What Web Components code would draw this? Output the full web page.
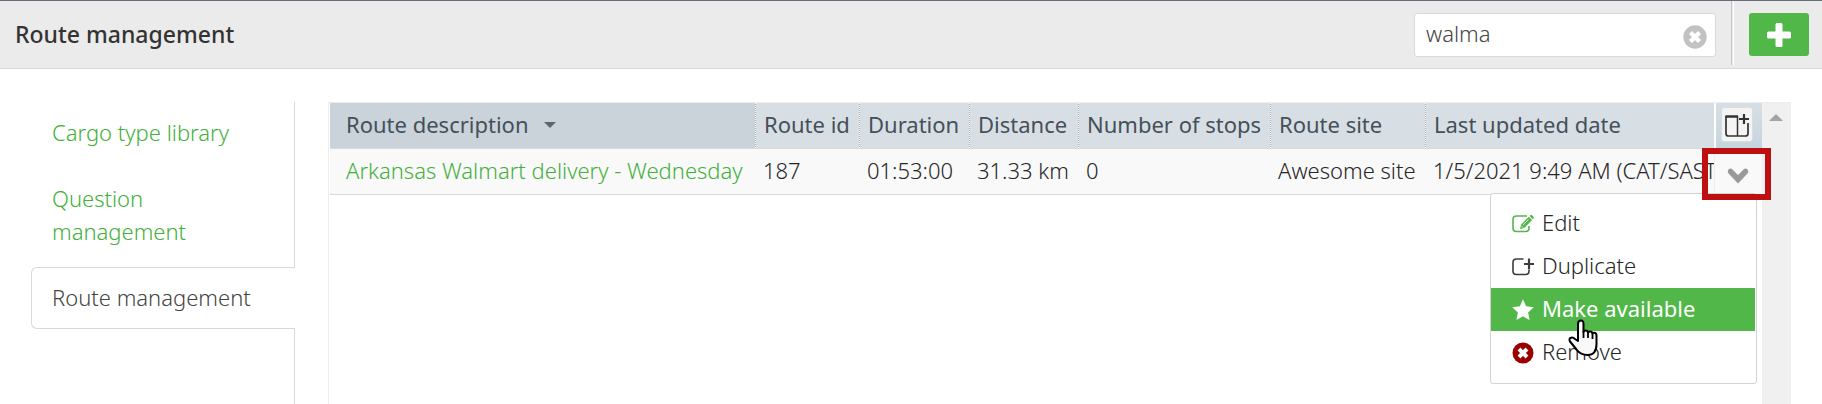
<!DOCTYPE html>
<html lang="en">
<head>
<meta charset="utf-8">
<title>Route management</title>
<style>
html{--green:#51b749;--link:#43b03a;--line:#d9d9d9;--ink:#262626}
body{margin:0;background:#fff;color:var(--ink);font:300 22px/33px "Noto Sans","Open Sans",sans-serif}
</style>
</head>
<body>
<app-shell>
  <page-header slot="header" heading="Route management">
    <search-box slot="search" value="walma"></search-box>
    <add-button slot="action"></add-button>
  </page-header>
  <side-nav slot="nav">
    <nav-item href="#cargo">Cargo type library</nav-item>
    <nav-item href="#questions">Question management</nav-item>
    <nav-item href="#routes" active>Route management</nav-item>
  </side-nav>
  <route-grid>
    <row-menu slot="menu">
      <menu-item icon="edit">Edit</menu-item>
      <menu-item icon="duplicate">Duplicate</menu-item>
      <menu-item icon="star" active>Make available</menu-item>
      <menu-item icon="remove">Remove</menu-item>
    </row-menu>
  </route-grid>
</app-shell>
<script>
const define = (name, render) => customElements.define(name, class extends HTMLElement {
  connectedCallback() {
    if (this.shadowRoot) return;
    this.attachShadow({mode: 'open'}).innerHTML = '<style>*{box-sizing:border-box}button,input{font:inherit;color:inherit;margin:0;padding:0;border:0;background:none}svg{display:block}</style>' + render(this);
  }
});

const icons = {
  edit: '<svg width="22" height="22" viewBox="0 0 22 22" fill="none" stroke="#51b749" stroke-width="1.6"><path d="M15 3H4.500Q1 3 1 6.500v8.500Q1 18.500 4.500 18.500h9q3.500 0 3.500-3.500V13"/><path d="M8 16l1.200-4.600 7.600-7.600 3.300 3.300-7.600 7.600z" fill="#51b749" stroke="none"/><path d="M17.600 3l.8-.8q.8-.8 1.600 0l1.500 1.500q.8.800 0 1.600l-.9.900z" fill="#51b749" stroke="none"/><path d="M11 12l5.500-5.500M9.500 13l1.500 1.500" stroke="#fff" stroke-width=".8"/></svg>',
  duplicate: '<svg width="22" height="22" viewBox="0 0 22 22" fill="none" stroke="#3c3c3c" stroke-width="1.600"><path d="M11.500 3h-7Q1 3 1 6.500v8.500Q1 18.500 4.500 18.500h9q3.500 0 3.500-3.500V14"/><path d="M17 2.500v11M12 8h10" stroke-width="2.200"/></svg>',
  star: '<svg width="22" height="22" viewBox="0 0 22 22"><path fill="#fff" d="M11 .3l3.100 7 7.700.9-5.700 5.200 1.500 7.700L11 17.300 4.400 21.100l1.500-7.700L.2 8.200l7.700-.9z"/></svg>',
  remove: '<svg width="22" height="22" viewBox="0 0 22 22"><circle cx="11" cy="11" r="10.500" fill="#9b0000"/><path d="M7 7l8 8M15 7l-8 8" stroke="#fff" stroke-width="4"/></svg>'
};

define('app-shell', () => `
<style>
:host{display:flex;flex-direction:column;min-height:100vh}
.body{flex:1;display:flex;gap:33px;padding:33px 31px 0}
main{flex:1;min-width:0;display:flex}
</style>
<slot name="header"></slot>
<div class="body"><slot name="nav"></slot><main><slot></slot></main></div>`);

define('page-header', el => `
<style>
:host{display:block}
header{display:flex;align-items:flex-start;height:69px;padding:12px 13px 0 15px;background:#ebebeb;border-top:1px solid #686d7b;border-bottom:1px solid var(--line)}
h1{flex:1;margin:5px 0 0;font-size:23px;line-height:33px;font-weight:500;color:#333}
.rule{width:3px;height:64px;margin:-12px 15px 0;border-left:1px solid #c4c4c4;border-right:1px solid #fff}
</style>
<header><h1>${el.getAttribute('heading')}</h1><slot name="search"></slot><span class="rule"></span><slot name="action"></slot></header>`);

define('search-box', el => `
<style>
:host{display:flex;align-items:center;width:302px;height:44px;box-sizing:border-box;border:1px solid var(--line);border-radius:3px;background:#fff;padding:0 8px 0 11px}
input{flex:1;min-width:0;height:33px;outline:0;color:#444;margin-bottom:4px}
button{margin-top:4px}
</style>
<input type="text" aria-label="Search routes" value="${el.getAttribute('value')}">
<button type="button" aria-label="Clear search"><svg width="24" height="24" viewBox="0 0 24 24"><circle cx="12" cy="12" r="11.700" fill="#c2c2c2"/><path d="M7.500 7.500l9 9M16.500 7.500l-9 9" stroke="#fff" stroke-width="4.400"/></svg></button>`);

define('add-button', () => `
<style>
:host{display:block}
button{display:grid;place-items:center;width:60px;height:43px;border-radius:3px;background:var(--green)}
</style>
<button type="button" aria-label="Add route"><svg width="24" height="24" viewBox="0 0 24 24"><path d="M10 0h4q1.500 0 1.500 1.500v7h7Q24 8.500 24 10v4q0 1.500-1.500 1.500h-7v7Q15.500 24 14 24h-4q-1.500 0-1.500-1.500v-7h-7Q0 15.500 0 14v-4q0-1.500 1.500-1.500h7v-7Q8.500 0 10 0z" fill="#fff"/></svg></button>`);

define('side-nav', () => `
<style>
:host{display:block;flex:0 0 264px}
nav{display:flex;flex-direction:column;gap:4px;height:100%;box-sizing:border-box;border-right:1px solid var(--line)}
</style>
<nav aria-label="Libraries"><slot></slot></nav>`);

define('nav-item', el => `
<style>
:host{display:block;border:1px solid transparent;border-right:0;padding:13px 24px 14px 20px}
:host([active]){border-color:var(--line);border-radius:6px 0 0 6px;background:#fff;margin-right:-1px}
a{display:block;max-width:200px;color:var(--link);text-decoration:none}
:host([active]) a{color:#444}
</style>
<a href="${el.getAttribute('href')}"${el.hasAttribute('active') ? ' aria-current="page"' : ''}><slot></slot></a>`);

define('route-grid', () => `
<style>
:host{flex:1;min-width:0;display:flex;border:1px solid #eee;border-bottom:0;padding-left:1px}
.view{flex:1;min-width:0}
table{width:100%;table-layout:fixed;border-collapse:separate;border-spacing:0}
th,td{height:46px;padding:0 0 2px 8px;border-bottom:1px solid var(--line);text-align:left;white-space:nowrap}
th{background:repeating-linear-gradient(#fff 0 1px,#a3acb3 1px 2px) left/1px 100% no-repeat #d7dfe5;color:#465059;font-weight:400;padding-left:9px}
th:first-child{background:#c9d3d9}
th:first-child,td:first-child{padding-left:16px}
td{background:#f9f9f9}
a{color:var(--link);text-decoration:none}
.sort{display:inline-block;margin:0 0 4px 15px;vertical-align:middle;border:6px solid transparent;border-top-color:#5c666e;border-bottom:0}
th.tools{padding:0;border-left:2px solid #fff;background:linear-gradient(#d7dfe5,#c4d5df)}
th.tools button{display:grid;place-items:center;width:32px;height:35px;margin:0 0 2px 5px;border:1px solid #ddd;border-radius:3px;background:#f4f4f4}
td.act{position:relative;padding:0;border-left:1px solid #eee}
td.act button{display:grid;place-items:center;width:100%;height:43px;padding:8px 2px 0 0}
.mark{position:absolute;z-index:3;left:-13px;top:-1px;width:69px;height:52px;border:6px solid #bd1111;pointer-events:none}
.pop{position:absolute;z-index:2;right:5px;top:44px}
.bar{flex:0 0 28px;background:#f0f0f0;display:flex;justify-content:center}
.bar i{width:0;height:0;margin-top:11px;border:7px solid transparent;border-top:0;border-bottom-color:#a3a3a3}
</style>
<div class="view"><table>
<colgroup><col style="width:425px"><col style="width:104px"><col style="width:110px"><col style="width:109px"><col style="width:192px"><col style="width:155px"><col><col style="width:48px"></colgroup>
<thead><tr><th scope="col" aria-sort="descending">Route description<span class="sort"></span></th><th scope="col">Route id</th><th scope="col">Duration</th><th scope="col">Distance</th><th scope="col">Number of stops</th><th scope="col">Route site</th><th scope="col">Last updated date</th>
<th class="tools"><button type="button" aria-label="Choose columns"><svg width="24" height="24" viewBox="0 0 24 24" fill="none" stroke="#333"><path d="M1 3v17.500Q1 23 3.500 23h17q2.500 0 2.500-2.500V10" stroke-width="1.700"/><path d="M.5 3.500h12.500" stroke-width="2.500"/><path d="M12.500 3v20" stroke-width="1.500"/><path d="M19 1v10M14 6h10" stroke-width="2.200"/></svg></button></th></tr></thead>
<tbody><tr><td><a href="#route-187">Arkansas Walmart delivery - Wednesday</a></td><td>187</td><td>01:53:00</td><td>31.33 km</td><td>0</td><td>Awesome site</td><td>1/5/2021 9:49 AM (CAT/SAST</td>
<td class="act"><button type="button" aria-label="Row actions" aria-expanded="true"><svg width="22" height="16" viewBox="0 0 22 16"><path d="M1.500 1.500q2-2 4 0L11 7l5.500-5.500q2-2 4 0 1.500 2 0 4L11 15.500 1.500 5.500q-1.500-2 0-4z" fill="#999"/></svg></button><div class="pop"><slot name="menu"></slot></div><span class="mark"></span></td></tr></tbody>
</table></div>
<div class="bar"><i></i></div>`);

define('row-menu', () => `
<style>
:host{display:block;position:relative}
.list{width:267px;box-sizing:border-box;padding:8px 1px 9px 0;background:#fff;border:1px solid #d3d3d3;border-radius:3px}
.cursor{position:absolute;left:78px;top:126px;pointer-events:none}
</style>
<div class="list" role="menu"><slot></slot></div>
<svg class="cursor" width="30" height="38" viewBox="0 0 30 38"><path d="M10 22V5Q10 1.500 12.800 1.500T15.500 5v8q.3-1.500 2-1.500 2.300 0 2.500 2 .5-1 2-1 2.200 0 2.500 2 .6-.8 1.800-.8 2.200 0 2.200 2.800v8.500Q28.500 36 19.500 36q-7 0-11-5.500L2 22.500q-1.500-3 1-3.800Q5 18 7 20z" fill="#f9f9f9" stroke="#000" stroke-width="2" stroke-linejoin="round"/><path d="M15.500 12v7M20 13.500V19M24.500 14.500V20" stroke="#000" stroke-width="1.800"/></svg>`);

define('menu-item', el => `
<style>
:host{display:block}
button{display:flex;align-items:center;gap:8px;width:100%;height:43px;padding:0 0 2px 21px;text-align:left;white-space:nowrap}
svg{flex:none;margin-top:2px}
:host([active]) button{background:var(--green);color:#fff;font-weight:400}
</style>
<button type="button" role="menuitem">${icons[el.getAttribute('icon')]}<slot></slot></button>`);
</script>
</body>
</html>
